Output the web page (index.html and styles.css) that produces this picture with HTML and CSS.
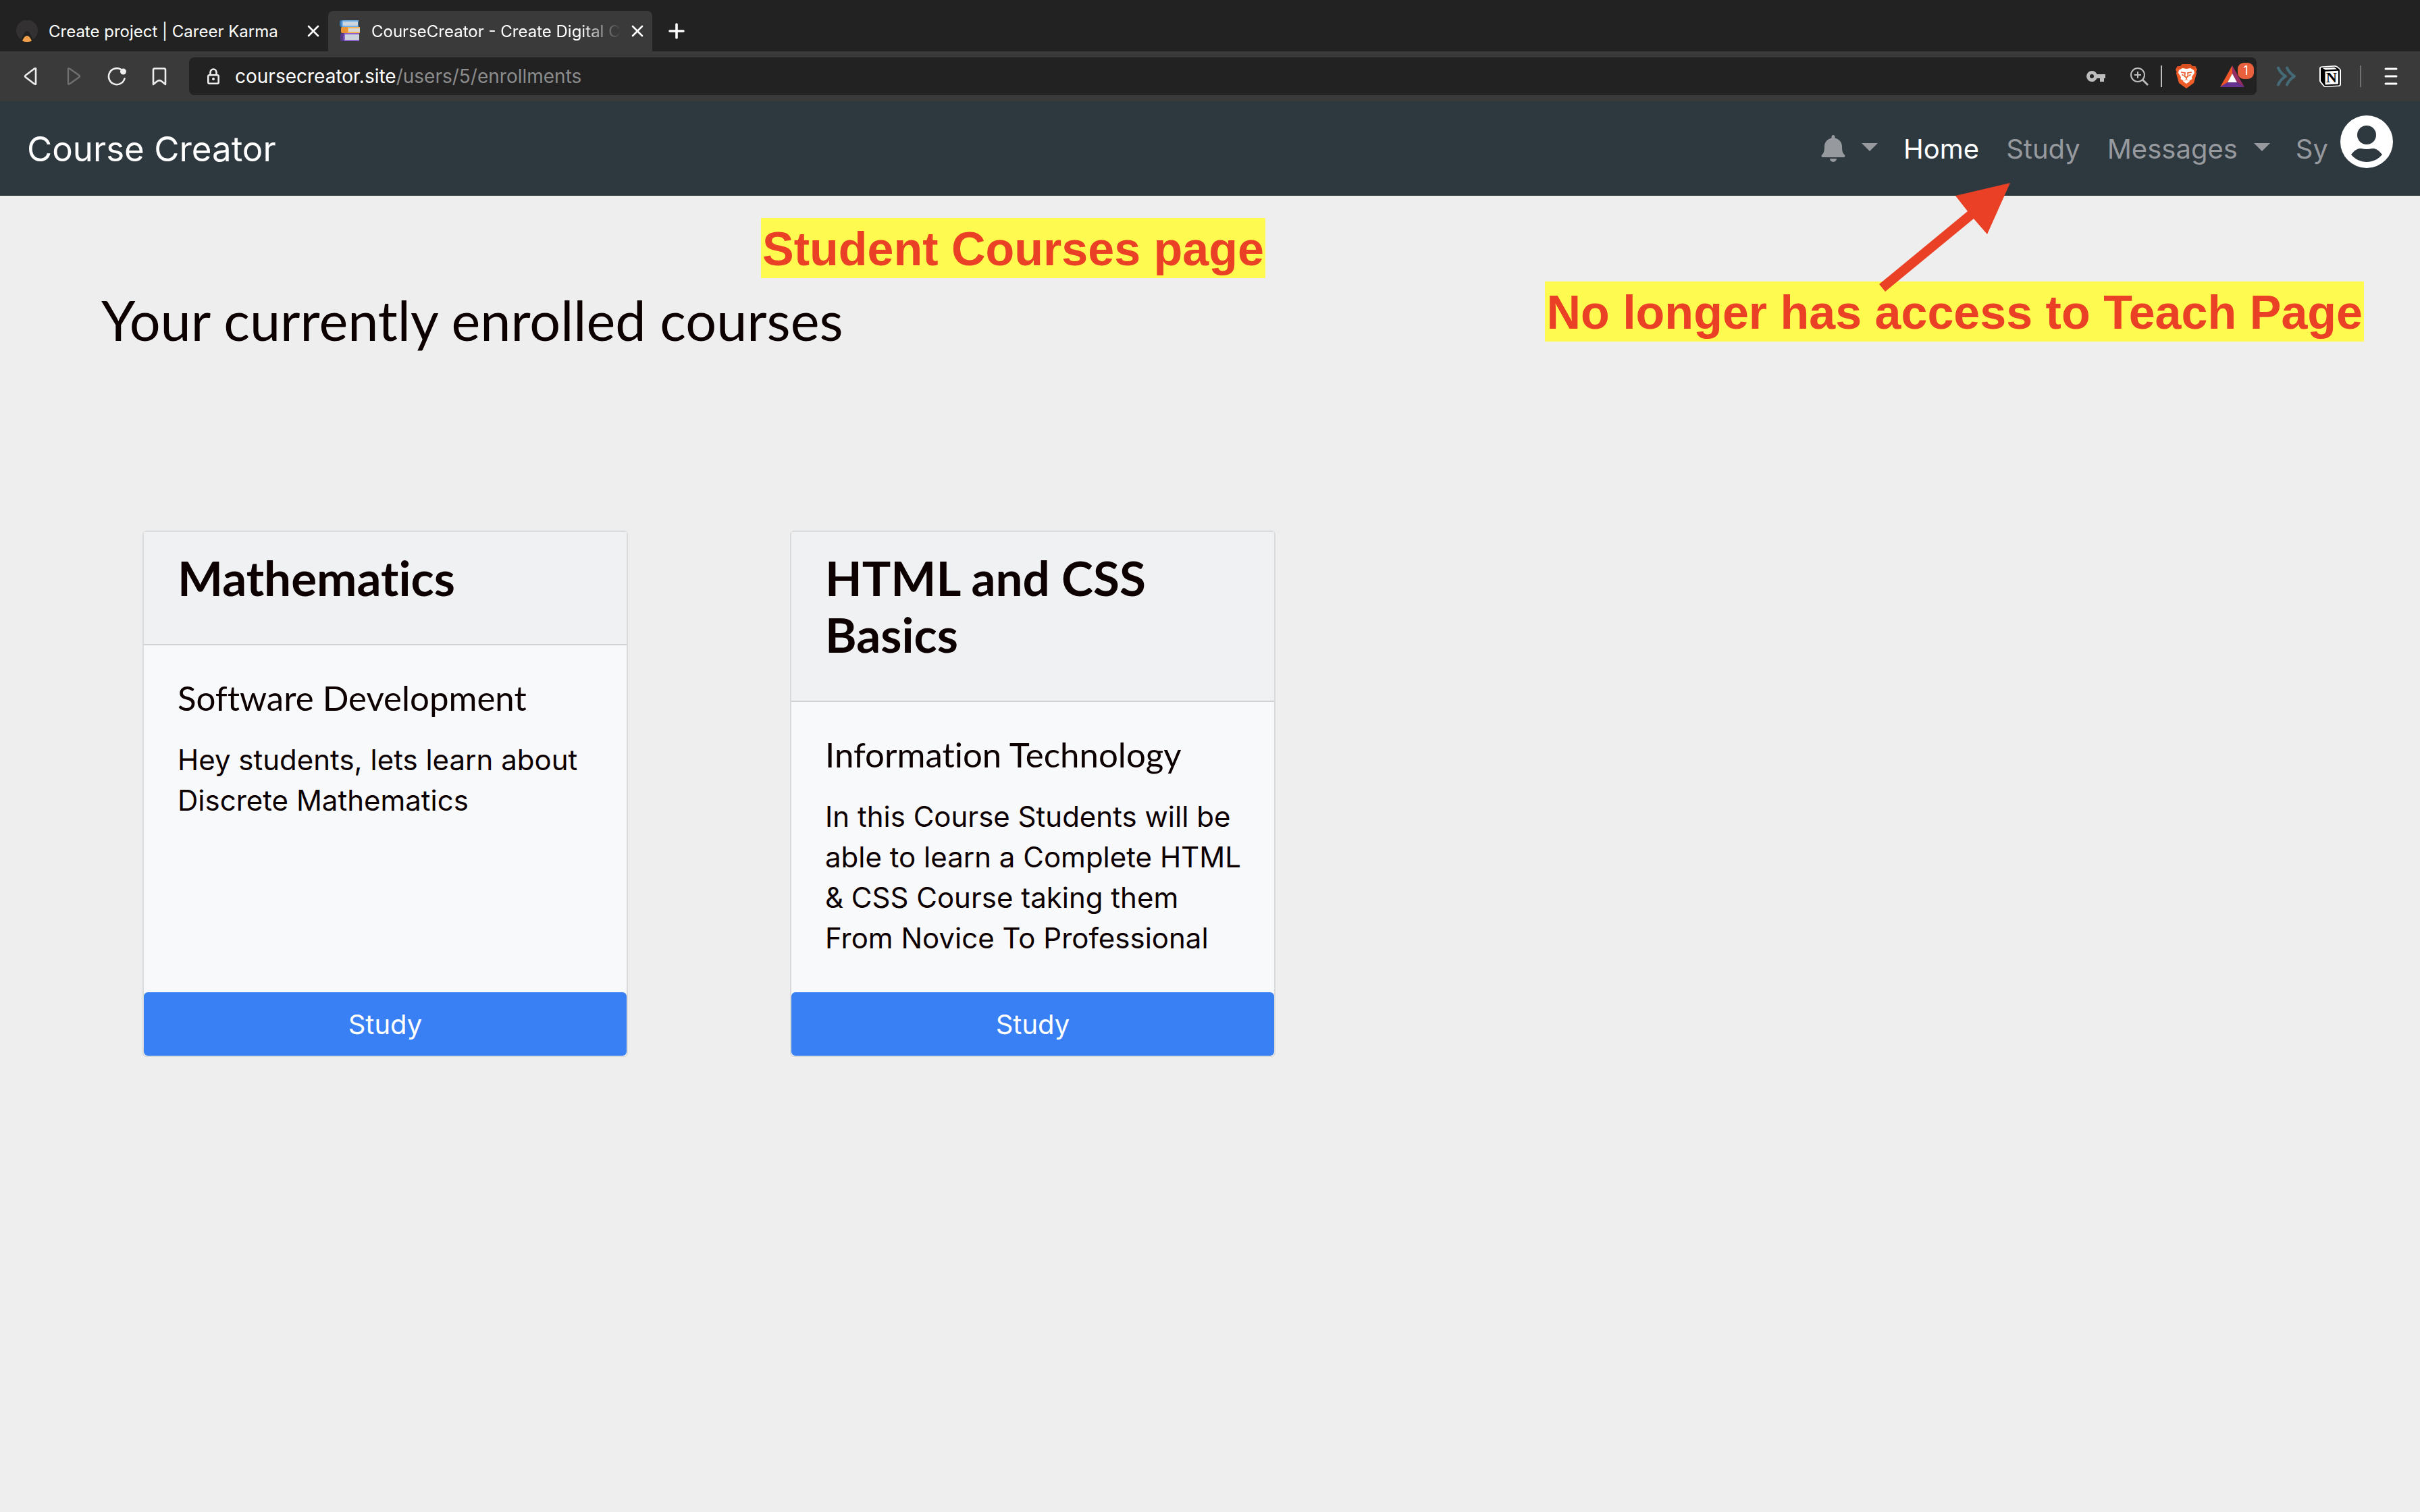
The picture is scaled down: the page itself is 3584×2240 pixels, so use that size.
FILE: index.html
```html
<!DOCTYPE html>
<html lang="en">
	<head>
		<title>CourseCreator - Create Digital Courses</title>
		<meta charset="utf-8">
		<meta name="viewport" content="width=device-width, initial-scale=1">
		<link rel="stylesheet" href="styles.css">
	</head>
	<body>
		<div class="browser">
			<div class="tabs">
				<div class="tab">
					<svg class="favicon" width="32" height="32" viewBox="0 0 32 32">
						<path fill="#333132" d="M7 28.500A16 16 0 1 1 25 28.500C22 24 20.500 16 16 16S10 24 7 28.500Z"/>
						<path fill="#f3a04c" d="M9 30.500C11 26 13 23 16 23S21 26 23 30.500C19 32.500 13 32.500 9 30.500Z"/>
					</svg>
					<span class="tab-title">Create project | Career Karma</span>
					<button class="icon-btn" aria-label="Close tab">
						<svg width="18" height="18" viewBox="0 0 18 18" stroke="#fff" stroke-width="2.600" stroke-linecap="round"><path d="M2 2L16 16M16 2L2 16"/></svg>
					</button>
				</div>
				<div class="tab active">
					<svg class="favicon" width="32" height="32" viewBox="0 0 32 32">
						<rect x="1" y="0" width="28" height="10" rx="3" fill="#3b78b0"/>
						<path fill="#6fb0ea" d="M6 0H29V2H6V8H29V10H6C3 10 3 0 6 0Z"/>
						<rect x="6" y="2" width="22" height="6" fill="#cdd6dd"/>
						<rect x="3" y="10" width="28" height="9" rx="2" fill="#ea9438"/>
						<path fill="#f5b558" d="M13 10H31V12H14V17H31V19H13Z"/>
						<rect x="14" y="12" width="17" height="5" fill="#d8d9d6"/>
						<rect x="2" y="19" width="28" height="12" rx="3" fill="#54398a"/>
						<path fill="#8b66c8" d="M8 19H30V21H9V29H30V31H8C6 29 6 21 8 19Z"/>
						<rect x="9" y="21" width="21" height="8" fill="#cdd3de"/>
					</svg>
					<span class="tab-title fade">CourseCreator - Create Digital C</span>
					<button class="icon-btn" aria-label="Close tab">
						<svg width="18" height="18" viewBox="0 0 18 18" stroke="#fff" stroke-width="2.600" stroke-linecap="round"><path d="M2 2L16 16M16 2L2 16"/></svg>
					</button>
				</div>
				<button class="icon-btn new-tab" aria-label="New tab">
					<svg width="24" height="24" viewBox="0 0 24 24" stroke="#fff" stroke-width="3.600" stroke-linecap="round"><path d="M12 2V22M2 12H22"/></svg>
				</button>
			</div>
			<div class="toolbar">
				<div class="tools">
					<button class="icon-btn" aria-label="Back">
						<svg width="28" height="28" viewBox="0 0 28 28" fill="none" stroke="#eee" stroke-width="2.600" stroke-linejoin="round"><path d="M21 2.500V25.500Q20 26 18.500 25L6 15.500Q4 14 6 12.500L18.500 3Q20 2 21 2.500Z"/></svg>
					</button>
					<button class="icon-btn" aria-label="Forward" disabled>
						<svg width="28" height="28" viewBox="0 0 28 28" fill="none" stroke="#707070" stroke-width="2.400" stroke-linejoin="round"><path d="M6 2.500V25.500Q7 26 8.500 25L22 15.500Q24 14 22 12.500L8.500 3Q7 2 6 2.500Z"/></svg>
					</button>
					<button class="icon-btn" aria-label="Reload">
						<svg width="28" height="28" viewBox="0 0 28 28" fill="none" stroke="#eee" stroke-width="2.600" stroke-linecap="round"><path d="M20 3.800A12 12 0 1 0 25.500 17.500"/><circle cx="23.500" cy="7" r="4.500" fill="#eee" stroke="none"/></svg>
					</button>
					<button class="icon-btn" aria-label="Bookmark this page">
						<svg width="28" height="28" viewBox="0 0 28 28" fill="none" stroke="#eee" stroke-width="2.600" stroke-linejoin="round"><path d="M7 2.500H21Q23 2.500 23 4.500V26L16.500 20.800Q14 19.500 11.500 20.800L5 26V4.500Q5 2.500 7 2.500Z"/></svg>
					</button>
				</div>
				<div class="address">
					<svg class="lock" width="18" height="24" viewBox="0 0 18 24" fill="none" stroke="#eee" stroke-width="2.600"><rect x="1.300" y="10.300" width="15.400" height="12.400" rx="2"/><path d="M4.500 10V6.500A4.500 5 0 0 1 13.500 6.500V10"/><circle cx="9" cy="16" r="2" fill="#eee" stroke="none"/></svg>
					<span class="url">coursecreator.site<span class="path">/users/5/enrollments</span></span>
					<button class="icon-btn" aria-label="Saved passwords">
						<svg width="28" height="28" viewBox="0 0 28 28" fill="#bdbdbd"><path fill-rule="evenodd" d="M8 6A8 8 0 0 1 15.500 11H28V17H26V22H20V17H15.500A8 8 0 1 1 8 6ZM8 11A3 3 0 1 0 8 17A3 3 0 1 0 8 11Z"/></svg>
					</button>
					<button class="icon-btn zoom" aria-label="Zoom">
						<svg width="28" height="28" viewBox="0 0 28 28" fill="none" stroke="#bdbdbd" stroke-width="2"><circle cx="12" cy="12" r="10"/><path d="M12 7V17M7 12H17"/><path stroke-width="2.800" d="M19 19L27 27"/></svg>
					</button>
					<span class="divider light"></span>
					<button class="icon-btn" aria-label="Brave Shields">
						<svg width="32" height="36" viewBox="0 0 32 36">
							<path fill="#ef5c27" d="M10 0H22L25 3L29 3L32 8L30.500 11L31 14L27 28L16 36L5 28L1 14L1.500 11L0 8L3 3L7 3Z"/>
							<path fill="#d94f1f" d="M10 0H22L25 3L29 3L31 6L27 7L22 5L16 7L10 5L5 7L1 6L3 3L7 3Z"/>
							<path fill="#fff" d="M5 9L10 6L16 7L22 6L27 9L28 13L24 19L24.500 22L20 25L16 22L12 25L7.500 22L8 19L4 13ZM11 25.500L16 23L21 25.500L16 29Z"/>
							<path fill="none" stroke="#ef5c27" stroke-width="1.700" d="M8 12L14 13L13.500 18L16 20L18.500 18L18 13L24 12M9.500 15.500L12 17M22.500 15.500L20 17M16 20V22.500"/>
						</svg>
					</button>
					<button class="icon-btn rewards" aria-label="Brave Rewards, 1 new">
						<svg width="36" height="32" viewBox="0 0 36 32">
							<path fill="#f1562b" d="M18 0V12L11 25L0 32Z"/>
							<path fill="#952c63" d="M18 0L36 32L25 25L18 12Z"/>
							<path fill="#65338f" d="M0 32L11 25H25L36 32Z"/>
							<path fill="#fff" d="M18 12L25 25H11Z"/>
						</svg>
						<span class="badge">1</span>
					</button>
				</div>
				<button class="icon-btn ext-first" aria-label="Extension">
					<svg width="30" height="30" viewBox="0 0 30 30" fill="none" stroke="#456b78" stroke-width="4" stroke-linecap="round" stroke-linejoin="round"><path d="M3 2.500Q6 10 14 15Q6 20 3 27.500M16 2.500Q19 10 27 15Q19 20 16 27.500"/></svg>
				</button>
				<button class="icon-btn ext" aria-label="Notion">
					<svg width="32" height="32" viewBox="0 0 32 32">
						<path fill="#fff" d="M2 1.500L23 0Q25 0 27 1.500L31 5Q32 6 32 8V28Q32 30.500 29.500 31L9 32Q7 32 6 31L1 25Q0 24 0 22V4Q0 2 2 1.500Z"/>
						<path fill="#000" d="M3 3L22 1.800Q24 1.800 26 3L30 6V28Q30 29.500 28 29.500L9 30.500Q8 30.500 7 29.500L2 23V4Z"/>
						<path fill="#fff" d="M4.500 3.800L22 2.800L26 5.500L9 6.500ZM8.500 8.800L28 7.800V27.500L8.500 28.500Z"/>
						<text class="notion-n" x="10" y="25">N</text>
					</svg>
				</button>
				<span class="divider"></span>
				<button class="icon-btn menu" aria-label="Menu">
					<svg width="20" height="28" viewBox="0 0 20 28" stroke="#fff" stroke-width="3" stroke-linecap="round"><path d="M2 3H18M2 14H18M2 25H18"/></svg>
				</button>
			</div>
		</div>

		<nav class="navbar">
			<a class="brand" href="#">Course Creator</a>
			<a class="nav-link drop" href="#" aria-label="Notifications">
				<svg width="36" height="40" viewBox="0 0 36 40" fill="currentColor"><path d="M15.500 2.500A2.400 2.400 0 0 1 20.500 2.500V4.500C27 6 31 11 31 17C31 24 32 27 35 29.500Q36.500 32.500 33.500 33H2.500Q-0.500 32.500 1 29.500C4 27 5 24 5 17C5 11 9 6 15.500 4.500ZM13 35H23A5 5 0 0 1 13 35Z"/></svg>
			</a>
			<a class="nav-link active" href="#">Home</a>
			<a class="nav-link" href="#">Study</a>
			<a class="nav-link drop" href="#">Messages</a>
			<a class="nav-link user" href="#">Sy
				<svg class="avatar" width="78" height="78" viewBox="0 0 78 78"><circle cx="39" cy="39" r="39" fill="#fff"/><circle cx="39" cy="29" r="14" fill="#2e383f"/><path fill="#2e383f" d="M16 58C22 50 27 48.500 31 49Q39 51 47 49C51 48.500 56 50 62 58C50 72.500 28 72.500 16 58Z"/></svg>
			</a>
		</nav>

		<main class="content">
			<h1>Your currently enrolled courses</h1>
			<div class="courses">
				<div class="card">
					<div class="card-header">
						<h2>Mathematics</h2>
					</div>
					<div class="card-body">
						<h3>Software Development</h3>
						<p>Hey students, lets learn about Discrete Mathematics</p>
					</div>
					<button class="study">Study</button>
				</div>
				<div class="card">
					<div class="card-header">
						<h2>HTML and CSS Basics</h2>
					</div>
					<div class="card-body">
						<h3>Information Technology</h3>
						<p>In this Course Students will be able to learn a Complete HTML &amp; CSS Course taking them<br>From Novice To Professional</p>
					</div>
					<button class="study">Study</button>
				</div>
			</div>
		</main>

		<!-- notes laid over the page -->
		<div class="note note-title">Student Courses page</div>
		<div class="note note-access">No longer has access to Teach Page</div>
		<svg class="arrow" width="196" height="163" viewBox="0 0 196 163"><path fill="#ea4025" d="M195 1L161 77L141 54L10 162L1 151L132 43L114 20Z"/></svg>
	</body>
</html>
```
FILE: styles.css
```css
*{
	box-sizing: border-box;
}
body{
	position: relative;
	margin: 0;
	min-height: 100vh;
	background-color: #eeeeee;
	color: #0c0000;
	font-family: Inter, sans-serif;
	font-size: 40px;
}
h1, h2, h3, p{
	margin: 0;
}
h1, h2, h3{
	font-family: Lato, sans-serif;
	font-variant-ligatures: none;
}
svg{
	display: block;
	flex: none;
}
button{
	border: none;
	font-family: inherit;
	cursor: pointer;
}
.icon-btn{
	display: flex;
	flex: none;
	padding: 0;
	background: none;
}

/* browser window */
.browser{
	background-color: #3a3a3a;
}
.tabs{
	display: flex;
	height: 76px;
	padding-top: 16px;
	background-color: #222222;
	color: #ffffff;
	font-size: 24px;
}
.tab{
	display: flex;
	align-items: center;
	width: 486px;
	padding: 0 13px 0 24px;
}
.tab.active{
	width: 480px;
	padding: 0 15px 0 16px;
	background-color: #3a3a3a;
	border-radius: 8px 8px 0 0;
}
.tab-title{
	flex: 1;
	margin: 0 16px;
	white-space: nowrap;
}
.fade{
	-webkit-mask-image: linear-gradient(to right, #000 84%, transparent);
	mask-image: linear-gradient(to right, #000 84%, transparent);
}
.new-tab{
	align-self: center;
	margin-left: 24px;
}
.toolbar{
	display: flex;
	align-items: center;
	height: 74px;
	padding: 0 33px 0 32px;
}
.tools{
	display: flex;
	justify-content: space-between;
	width: 218px;
	margin-right: 30px;
}
.address{
	display: flex;
	flex: 1;
	align-items: center;
	height: 56px;
	padding: 0 18px 0 27px;
	background-color: #222222;
	border-radius: 8px;
}
.url{
	flex: 1;
	margin-left: 23px;
	color: #ffffff;
	font-size: 28px;
}
.path{
	color: #8c8c8c;
}
.zoom{
	margin-left: 36px;
}
.divider{
	width: 2px;
	height: 32px;
	margin: 0 34px 0 28px;
	background-color: #707070;
}
.divider.light{
	margin: 0 20px 0 18px;
	background-color: #bdbdbd;
}
.rewards{
	position: relative;
	margin-left: 34px;
}
.badge{
	position: absolute;
	top: -4px;
	right: -14px;
	width: 24px;
	height: 24px;
	border-radius: 9px;
	background-color: #e8603c;
	color: #ffffff;
	font-size: 18px;
	line-height: 24px;
	text-align: center;
}
.ext-first{
	margin-left: 29px;
}
.ext{
	margin-left: 34px;
}
.notion-n{
	font-family: "Liberation Serif", serif;
	font-size: 22px;
	font-weight: bold;
}

/* site navbar */
.navbar{
	display: flex;
	align-items: center;
	height: 140px;
	padding: 0 40px;
	background-color: #2e383f;
}
.brand{
	margin-right: auto;
	color: #ffffff;
	font-size: 51px;
	text-decoration: none;
}
.nav-link{
	display: flex;
	align-items: center;
	padding: 0 20px;
	color: #96999d;
	text-decoration: none;
}
.nav-link.active{
	color: #ffffff;
}
.drop{
	padding-right: 18px;
}
.drop::after{
	content: "";
	margin: 0 0 4px 24px;
	border: 12px solid transparent;
	border-top-color: currentColor;
	border-bottom: none;
}
.user{
	padding-right: 0;
}
.avatar{
	margin: 0 0 20px 18px;
}

/* courses */
.content{
	padding: 136px 150px;
}
h1{
	font-size: 81px;
	font-weight: normal;
	line-height: 96px;
}
.courses{
	display: grid;
	grid-template-columns: repeat(3, 1fr);
	gap: 240px;
	margin: 264px 586px 0 61px;
}
.card{
	display: flex;
	flex-direction: column;
	background-color: #f8f9fb;
	border: 2px solid #d9dadc;
	border-radius: 6px;
}
.card-header{
	padding: 26px 50px 56px;
	background-color: #eff1f3;
	border-bottom: 2px solid #d0d2d4;
}
h2{
	font-size: 71px;
	line-height: 84px;
}
.card-body{
	flex: 1;
	padding: 48px 40px 50px 50px;
}
h3{
	margin-bottom: 32px;
	font-size: 51px;
	font-weight: normal;
	line-height: 60px;
}
.card-body p{
	font-size: 42px;
	line-height: 60px;
}
.study{
	height: 94px;
	border-radius: 6px;
	background-color: #3880f3;
	color: #ffffff;
	font-size: 40px;
}

/* notes */
.note{
	position: absolute;
	padding: 4px 2px 0;
	background-color: #fffa50;
	color: #ea4025;
	font-family: "Liberation Sans", sans-serif;
	font-size: 70px;
	font-weight: bold;
	line-height: 85px;
	white-space: nowrap;
}
.note-title{
	top: 323px;
	left: 1127px;
}
.note-access{
	top: 417px;
	right: 83px;
}
.arrow{
	position: absolute;
	top: 270px;
	right: 606px;
}
```
